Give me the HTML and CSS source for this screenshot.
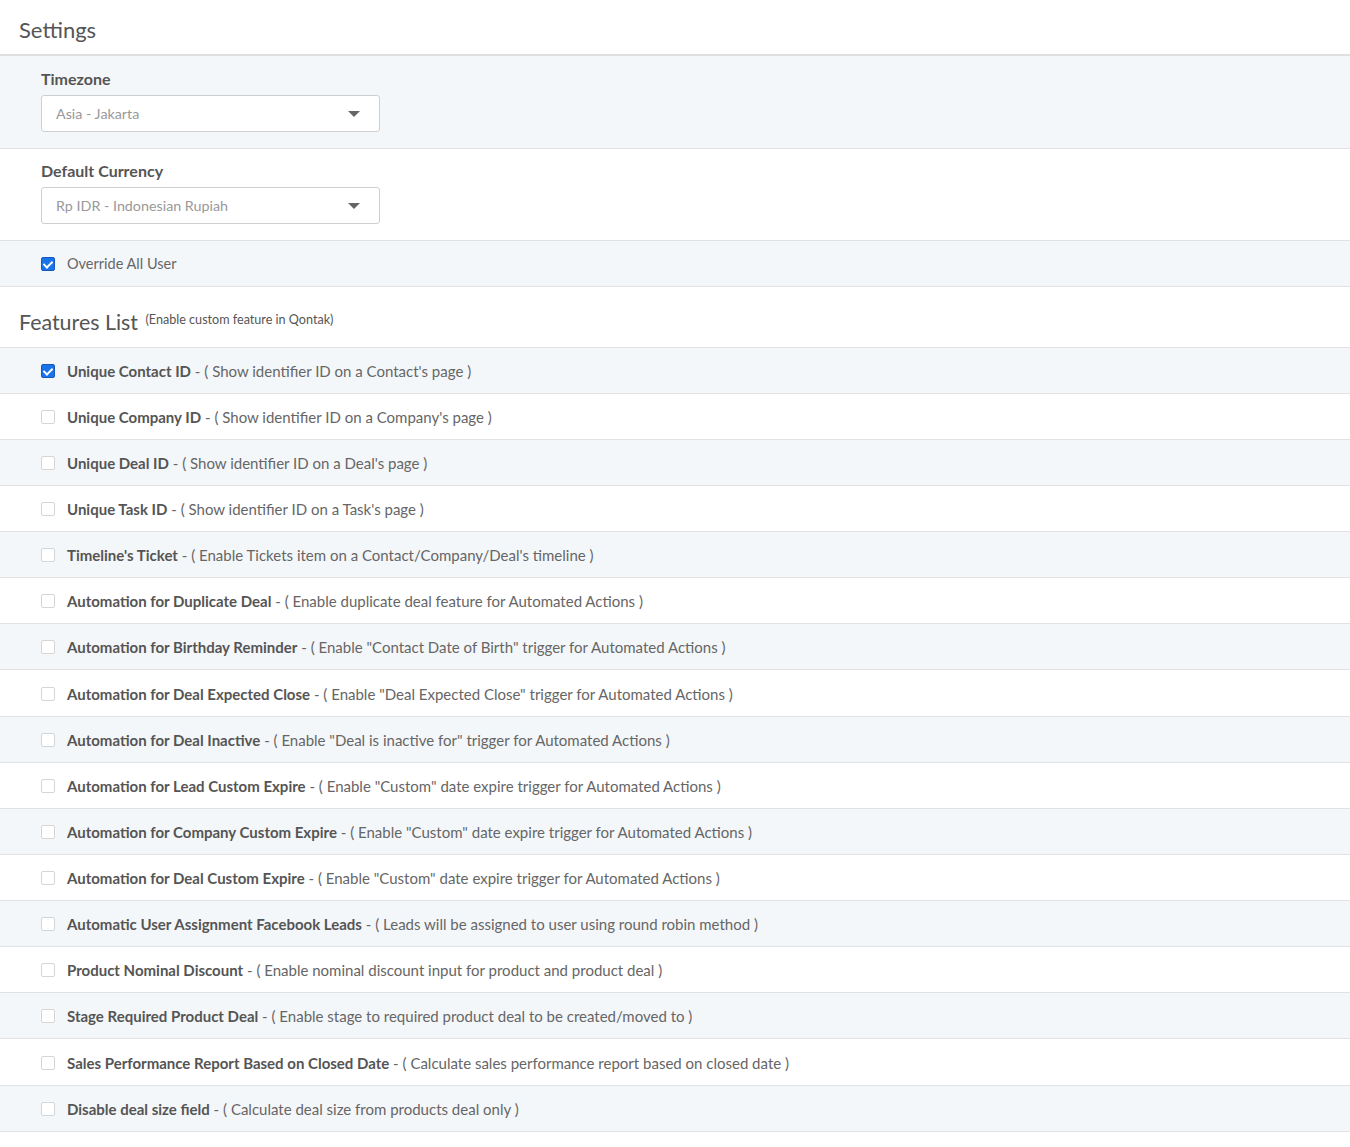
FILE: index.html
```html
<!DOCTYPE html>
<html lang="en">
<head>
    <meta charset="UTF-8">
    <title>Settings</title>
    <link rel="stylesheet" href="styles.css">
</head>
<body>
    <div class="page-title">Settings</div>

    <div class="section grey first">
        <div class="field-label">Timezone</div>
        <div class="select">
            <span>Asia - Jakarta</span>
            <span class="caret"></span>
        </div>
    </div>

    <div class="section">
        <div class="field-label">Default Currency</div>
        <div class="select">
            <span>Rp IDR - Indonesian Rupiah</span>
            <span class="caret"></span>
        </div>
    </div>

    <div class="row grey">
        <span class="check checked"></span>
        <span class="plain">Override All User</span>
    </div>

    <div class="features-title">
        Features List <small>(Enable custom feature in Qontak)</small>
    </div>

    <div class="features">
        <div class="row grey"><span class="check checked"></span><span><b>Unique Contact ID</b> - ( Show identifier ID on a Contact's page )</span></div>
        <div class="row"><span class="check"></span><span><b>Unique Company ID</b> - ( Show identifier ID on a Company's page )</span></div>
        <div class="row grey"><span class="check"></span><span><b>Unique Deal ID</b> - ( Show identifier ID on a Deal's page )</span></div>
        <div class="row"><span class="check"></span><span><b>Unique Task ID</b> - ( Show identifier ID on a Task's page )</span></div>
        <div class="row grey"><span class="check"></span><span><b>Timeline's Ticket</b> - ( Enable Tickets item on a Contact/Company/Deal's timeline )</span></div>
        <div class="row"><span class="check"></span><span><b>Automation for Duplicate Deal</b> - ( Enable duplicate deal feature for Automated Actions )</span></div>
        <div class="row grey"><span class="check"></span><span><b>Automation for Birthday Reminder</b> - ( Enable "Contact Date of Birth" trigger for Automated Actions )</span></div>
        <div class="row"><span class="check"></span><span><b>Automation for Deal Expected Close</b> - ( Enable "Deal Expected Close" trigger for Automated Actions )</span></div>
        <div class="row grey"><span class="check"></span><span><b>Automation for Deal Inactive</b> - ( Enable "Deal is inactive for" trigger for Automated Actions )</span></div>
        <div class="row"><span class="check"></span><span><b>Automation for Lead Custom Expire</b> - ( Enable "Custom" date expire trigger for Automated Actions )</span></div>
        <div class="row grey"><span class="check"></span><span><b>Automation for Company Custom Expire</b> - ( Enable "Custom" date expire trigger for Automated Actions )</span></div>
        <div class="row"><span class="check"></span><span><b>Automation for Deal Custom Expire</b> - ( Enable "Custom" date expire trigger for Automated Actions )</span></div>
        <div class="row grey"><span class="check"></span><span><b>Automatic User Assignment Facebook Leads</b> - ( Leads will be assigned to user using round robin method )</span></div>
        <div class="row"><span class="check"></span><span><b>Product Nominal Discount</b> - ( Enable nominal discount input for product and product deal )</span></div>
        <div class="row grey"><span class="check"></span><span><b>Stage Required Product Deal</b> - ( Enable stage to required product deal to be created/moved to )</span></div>
        <div class="row"><span class="check"></span><span><b>Sales Performance Report Based on Closed Date</b> - ( Calculate sales performance report based on closed date )</span></div>
        <div class="row grey"><span class="check"></span><span><b>Disable deal size field</b> - ( Calculate deal size from products deal only )</span></div>
    </div>
</body>
</html>
```

FILE: styles.css
```css
body {
    margin: 0;
    font-family: Lato, "Open Sans", sans-serif;
    color: #666;
    background: #fff;
}
.page-title {
    height: 54px;
    padding-left: 19px;
    font-size: 22px;
    line-height: 60px;
    color: #555;
    border-bottom: 2px solid #e0e0e0;
}
.grey {
    background-color: #f4f7fa;
}
.section {
    padding: 13px 0 16px 41px;
    border-bottom: 1px solid #e2e2e2;
}
.section.first {
    padding-top: 14px;
}
.field-label {
    font-size: 16px;
    font-weight: bold;
    color: #555;
    height: 18px;
    line-height: 18px;
    margin-bottom: 7px;
}
.select {
    width: 304px;
    height: 35px;
    border: 1px solid #cfcfcf;
    border-radius: 3px;
    background: #fff;
    display: flex;
    align-items: center;
    justify-content: space-between;
    padding: 0 19px 0 14px;
    font-size: 14.3px;
    color: #999;
}
.caret {
    width: 0;
    height: 0;
    border-left: 6px solid transparent;
    border-right: 6px solid transparent;
    border-top: 6px solid #666;
}
.row {
    height: 45px;
    display: flex;
    align-items: center;
    padding-left: 41px;
    border-bottom: 1px solid #e2e2e2;
    font-size: 15px;
    color: #666;
}
.features .row {
    padding-top: 1px;
    height: 44px;
}
.features .row:nth-child(8n) {
    height: 45px;
}
.row b {
    color: #555;
}
.plain {
    font-size: 14.5px;
    color: #666;
}
.check {
    width: 12px;
    height: 12px;
    border: 1px solid #d6d6d6;
    border-radius: 2px;
    background: #fff;
    margin-right: 12px;
    flex-shrink: 0;
    position: relative;
}
.check.checked {
    background: #1a73e8;
    border-color: #1559c0;
}
.check.checked::after {
    content: "";
    position: absolute;
    left: 3px;
    top: 1px;
    width: 4px;
    height: 7px;
    border: solid #fff;
    border-width: 0 2px 2px 0;
    transform: rotate(45deg);
}
.features-title {
    height: 60px;
    padding-left: 19px;
    font-size: 21.4px;
    line-height: 66px;
    color: #555;
    border-bottom: 1px solid #e2e2e2;
}
.features-title small {
    font-size: 12.6px;
    vertical-align: 6px;
    margin-left: 2px;
    color: #555;
}
```
